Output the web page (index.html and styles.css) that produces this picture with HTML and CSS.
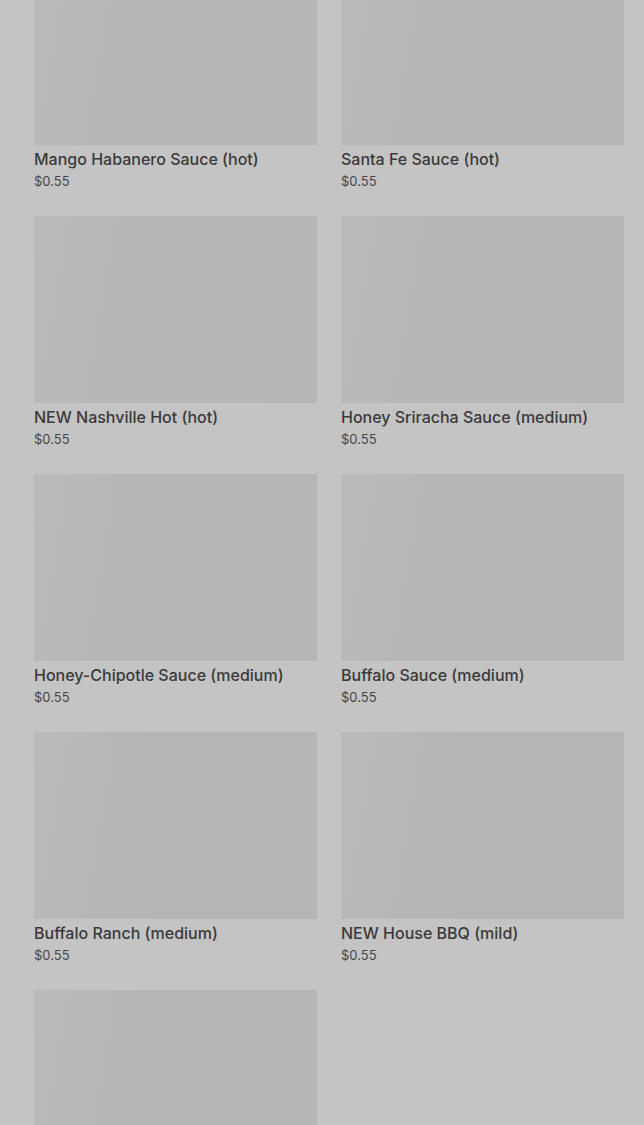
FILE: index.html
```html
<!DOCTYPE html>
<html lang="en">

<head>
    <meta charset="UTF-8">
    <title>Sauces</title>
    <meta name="viewport" content="width=device-width, initial-scale=1.0">
    <link rel="stylesheet" href="styles.css">
</head>

<body>

    <main class="product-grid">
        <div class="product">
            <div class="product-image"></div>
            <h3 class="product-name">Mango Habanero Sauce (hot)</h3>
            <p class="product-price">$0.55</p>
        </div>
        <div class="product">
            <div class="product-image"></div>
            <h3 class="product-name">Santa Fe Sauce (hot)</h3>
            <p class="product-price">$0.55</p>
        </div>
        <div class="product">
            <div class="product-image"></div>
            <h3 class="product-name">NEW Nashville Hot (hot)</h3>
            <p class="product-price">$0.55</p>
        </div>
        <div class="product">
            <div class="product-image"></div>
            <h3 class="product-name">Honey Sriracha Sauce (medium)</h3>
            <p class="product-price">$0.55</p>
        </div>
        <div class="product">
            <div class="product-image"></div>
            <h3 class="product-name">Honey-Chipotle Sauce (medium)</h3>
            <p class="product-price">$0.55</p>
        </div>
        <div class="product">
            <div class="product-image"></div>
            <h3 class="product-name">Buffalo Sauce (medium)</h3>
            <p class="product-price">$0.55</p>
        </div>
        <div class="product">
            <div class="product-image"></div>
            <h3 class="product-name">Buffalo Ranch (medium)</h3>
            <p class="product-price">$0.55</p>
        </div>
        <div class="product">
            <div class="product-image"></div>
            <h3 class="product-name">NEW House BBQ (mild)</h3>
            <p class="product-price">$0.55</p>
        </div>
        <div class="product">
            <div class="product-image"></div>
        </div>
    </main>

</body>

</html>
```

FILE: styles.css
```css
body {
    font-family: Inter, "Noto Sans", sans-serif;
    background-color: #c4c4c4;
    color: #3b3b3b;
    margin: 0;
    padding: 0;
    overflow: hidden;
    height: 1125px;
}

.product-grid {
    display: grid;
    grid-template-columns: 283px 283px;
    column-gap: 24px;
    row-gap: 25px;
    padding: 0 20px 0 34px;
    margin-top: -42px;
}

.product-image {
    height: 187px;
    background: linear-gradient(100deg, #bababa 0%, #b6b6b6 30%, #b5b5b5 100%);
}

.product-name {
    margin: 2px 0 0;
    font-size: 16px;
    font-weight: 500;
    line-height: 24px;
    color: #3a3a3a;
}

.product-price {
    margin: 0;
    font-size: 13px;
    line-height: 20px;
    color: #474747;
}
```
